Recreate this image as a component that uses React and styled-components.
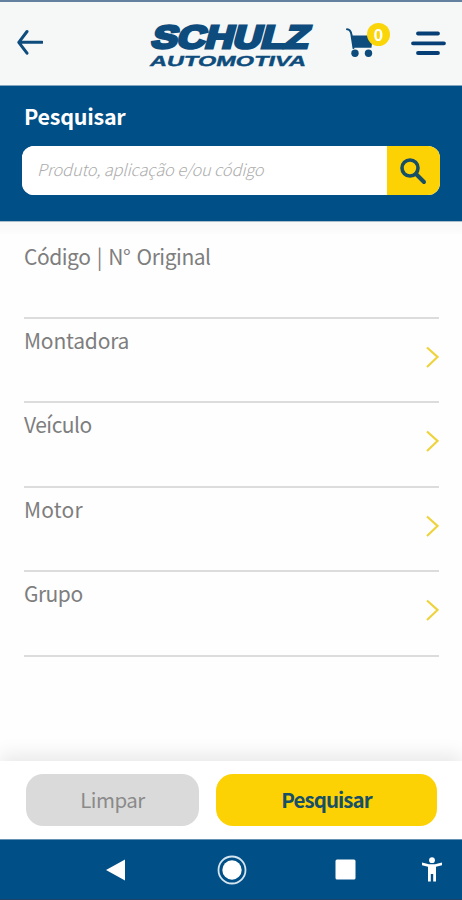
import React from 'react';
import styled, { createGlobalStyle } from 'styled-components';

const GlobalStyle = createGlobalStyle`
  * {
    box-sizing: border-box;
  }
  body {
    margin: 0;
    background-color: #fefefe;
    font-family: 'Noto Sans CJK SC', 'Noto Sans', sans-serif;
  }
  svg {
    display: block;
  }
  button {
    font-family: inherit;
    border: none;
    padding: 0;
    cursor: pointer;
  }
`;

const Screen = styled.div`
  display: flex;
  flex-direction: column;
  height: 900px;
  overflow: hidden;
`;

const Header = styled.header`
  flex: none;
  display: flex;
  align-items: flex-start;
  height: 86px;
  padding: 21px 16px 0 17px;
  border-top: 2px solid #64829f;
  border-bottom: 1px solid #86a5bf;
  background-color: #f6f7f7;
`;

const IconButton = styled.button`
  background: none;
  margin: ${props => props.$margin || 0};
`;

const Logo = styled.svg`
  margin-left: 105px;
  overflow: visible;
`;

const CartButton = styled(IconButton)`
  position: relative;
  margin-left: 29px;
`;

const Badge = styled.span`
  position: absolute;
  top: 0;
  left: 22px;
  width: 23px;
  height: 23px;
  border-radius: 50%;
  background-color: #fad50a;
  color: #ffffff;
  font-size: 16px;
  font-weight: 700;
  line-height: 22px;
  text-align: center;
`;

const SearchSection = styled.section`
  flex: none;
  height: 135px;
  padding: 16px 22px 0 22px;
  background-color: #004f86;
`;

const Title = styled.h1`
  margin: 0 0 0 2px;
  font-size: 21.5px;
  font-weight: 700;
  line-height: 28px;
  letter-spacing: -0.25px;
  color: #ffffff;
`;

const SearchBox = styled.div`
  display: flex;
  height: 49px;
  margin-top: 16px;
  border-radius: 12px;
  overflow: hidden;
  background-color: #ffffff;
`;

const SearchInput = styled.input`
  flex: 1;
  min-width: 0;
  padding: 0 0 3px 15px;
  border: none;
  outline: none;
  font-family: inherit;
  font-size: 16.5px;
  font-style: italic;
  letter-spacing: -0.18px;
  &::placeholder {
    color: #acacac;
    font-weight: 300;
    opacity: 1;
  }
`;

const SearchButton = styled.button`
  display: flex;
  align-items: center;
  justify-content: center;
  width: 53px;
  padding-right: 2px;
  background-color: #fdd205;
`;

const Fields = styled.main`
  flex: 1;
  padding: 12px 23px 0 24px;
  border-top: 1px solid #a9bdcd;
  background: linear-gradient(#f8f8f8, #fbfbfb 10px, #fefefe 13px);
`;

const Field = styled.div`
  display: flex;
  justify-content: space-between;
  height: 84.6px;
  padding-top: ${props => (props.$select ? '7px' : '8px')};
  border-bottom: 2px solid #dcdcdc;
`;

const Label = styled.span`
  font-size: 21px;
  line-height: 28px;
  letter-spacing: ${props => props.$spacing}px;
  word-spacing: 2px;
  color: #7e7e7e;
`;

const Chevron = styled.svg`
  margin-top: 19px;
`;

const Actions = styled.footer`
  flex: none;
  display: flex;
  gap: 17px;
  height: 78px;
  padding: 13px 25px 0 26px;
  background-color: #ffffff;
  box-shadow: 0 -6px 18px rgba(0, 0, 0, 0.09);
`;

const ActionButton = styled.button`
  width: ${props => (props.$primary ? '221px' : '173px')};
  height: 52px;
  padding-bottom: 3px;
  border-radius: 17px;
  background-color: ${props => (props.$primary ? '#fdd205' : '#dadada')};
  color: ${props => (props.$primary ? '#174f66' : '#8a8a8a')};
  font-size: 20.5px;
  font-weight: ${props => (props.$primary ? 700 : 400)};
  letter-spacing: ${props => (props.$primary ? '-0.95px' : '-0.5px')};
`;

const NavBar = styled.nav`
  flex: none;
  display: flex;
  align-items: center;
  height: 61px;
  padding-left: 105px;
  border-top: 1px solid #6592b2;
  border-bottom: 1px solid #1d4468;
  background-color: #004f86;
`;

const NavIcon = styled.svg`
  margin-left: ${props => props.$gap || '0'};
`;

const fields = [
  { label: 'Código | N° Original', spacing: -0.45 },
  { label: 'Montadora', spacing: -0.2, select: true },
  { label: 'Veículo', spacing: -0.5, select: true },
  { label: 'Motor', spacing: 0.2, select: true },
  { label: 'Grupo', spacing: -0.5, select: true },
];

const BackIcon = () => (
  <svg width="26" height="40" fill="none" stroke="#0d4c7c" strokeWidth="3">
    <path
      d="M25 19.3H2M10 8.5L1.8 19.3L10 30.2"
      strokeLinecap="round"
      strokeLinejoin="round"
    />
  </svg>
);

const CartIcon = () => (
  <svg width="46" height="36" fill="#0d4c7c">
    <path
      d="M2 6.200C5 6.200 6 8 6.500 12L8.500 25"
      fill="none"
      stroke="#0d4c7c"
      strokeWidth="2"
      strokeLinecap="round"
    />
    <path d="M6.500 12.500H28L26.500 24.800H8.200Z" />
    <circle cx="10" cy="30.300" r="3.700" />
    <circle cx="23.500" cy="30.300" r="3.700" />
  </svg>
);

const MenuIcon = () => (
  <svg
    width="36"
    height="40"
    stroke="#063f75"
    strokeWidth="3.800"
    strokeLinecap="round"
  >
    <path d="M7 10.500H27M2 20.300H33M7 30H27" />
  </svg>
);

const SchulzLogo = () => (
  <Logo
    width="168"
    height="46"
    fill="#0d4c7c"
    stroke="#0d4c7c"
    fontFamily="'Liberation Sans', Arial, sans-serif"
    fontWeight="700"
  >
    <text
      transform="translate(2 25) skewX(-15)"
      fontSize="32"
      strokeWidth="3"
      textLength="157"
      lengthAdjust="spacingAndGlyphs"
    >
      SCHULZ
    </text>
    <text
      transform="translate(1 42.500) skewX(-15)"
      fontSize="14.500"
      strokeWidth="0.400"
      textLength="156"
      lengthAdjust="spacingAndGlyphs"
    >
      AUTOMOTIVA
    </text>
  </Logo>
);

const App = () => (
  <Screen>
    <GlobalStyle />
    <Header>
      <IconButton aria-label="Voltar">
        <BackIcon />
      </IconButton>
      <SchulzLogo />
      <CartButton aria-label="Carrinho">
        <CartIcon />
        <Badge>0</Badge>
      </CartButton>
      <IconButton $margin="0 0 0 20px" aria-label="Menu">
        <MenuIcon />
      </IconButton>
    </Header>

    <SearchSection>
      <Title>Pesquisar</Title>
      <SearchBox>
        <SearchInput placeholder="Produto, aplicação e/ou código" />
        <SearchButton aria-label="Buscar">
          <svg width="28" height="28" fill="none" stroke="#174f66">
            <circle cx="11" cy="11" r="8" strokeWidth="3.600" />
            <path d="M17 17L25 25" strokeWidth="4" strokeLinecap="round" />
          </svg>
        </SearchButton>
      </SearchBox>
    </SearchSection>

    <Fields>
      {fields.map(field => (
        <Field key={field.label} $select={field.select}>
          <Label $spacing={field.spacing}>{field.label}</Label>
          {field.select && (
            <Chevron width="14" height="24" fill="none" stroke="#eed33d">
              <path d="M2 2.500L12.500 12L2 22" strokeWidth="2.200" />
            </Chevron>
          )}
        </Field>
      ))}
    </Fields>

    <Actions>
      <ActionButton>Limpar</ActionButton>
      <ActionButton $primary>Pesquisar</ActionButton>
    </Actions>

    <NavBar>
      <NavIcon width="21" height="22" fill="#ffffff">
        <path d="M1 11L20 0.500V21.500Z" />
      </NavIcon>
      <NavIcon $gap="91px" width="30" height="30">
        <circle
          cx="15"
          cy="15"
          r="13.500"
          fill="none"
          stroke="#d5e5f0"
          strokeWidth="1.800"
        />
        <circle cx="15" cy="15" r="9.700" fill="#ffffff" />
      </NavIcon>
      <NavIcon $gap="88px" width="21" height="21" fill="#ffffff">
        <rect x="0.500" y="0.500" width="20" height="20" rx="1.500" />
      </NavIcon>
      <NavIcon $gap="65px" width="22" height="25" fill="#ffffff">
        <circle cx="11" cy="3.200" r="2.900" />
        <path d="M1 5.500L8 7.200H14L21 5.500V8.200L15 9.800V24.500H12.200V17H9.800V24.500H7V9.800L1 8.200Z" />
      </NavIcon>
    </NavBar>
  </Screen>
);

export default App;
